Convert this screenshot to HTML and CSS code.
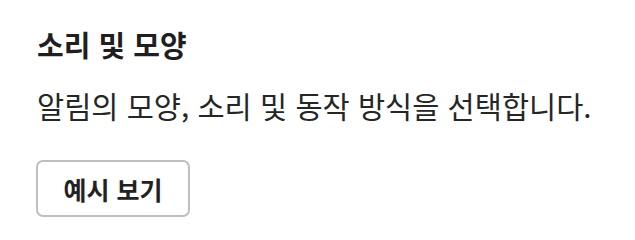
FILE: index.html
```html
<!DOCTYPE html>
<html lang="ko">
<head>
<meta charset="utf-8">
<link rel="stylesheet" href="styles.css">
</head>
<body>
<section class="panel">
  <h2 class="title">소리 및 모양</h2>
  <p class="desc">알림의 모양, 소리 및 동작 방식을 선택합니다.</p>
  <button class="btn" type="button">예시 보기</button>
</section>
</body>
</html>
```

FILE: styles.css
```css
html, body {
  margin: 0;
  padding: 0;
  background: #ffffff;
}
body {
  font-family: "Noto Sans CJK KR", "Noto Sans", sans-serif;
  color: #222222;
}
.panel {
  display: flex;
  flex-direction: column;
  align-items: flex-start;
  padding: 24px 36px;
}
.title {
  margin: 0 0 0 1px;
  font-size: 29px;
  font-weight: 700;
  line-height: 40px;
  color: #1f1f1f;
}
.desc {
  margin: 21px 0 0 1px;
  font-size: 29.5px;
  font-weight: 400;
  line-height: 40px;
  color: #262626;
}
.btn {
  margin-top: 35px;
  width: 154px;
  height: 57px;
  border: 2px solid #bfbfbf;
  border-radius: 7px;
  background: #ffffff;
  font-family: "Noto Sans CJK KR", "Noto Sans", sans-serif;
  font-size: 25px;
  font-weight: 700;
  color: #222222;
  padding: 0;
}
```
